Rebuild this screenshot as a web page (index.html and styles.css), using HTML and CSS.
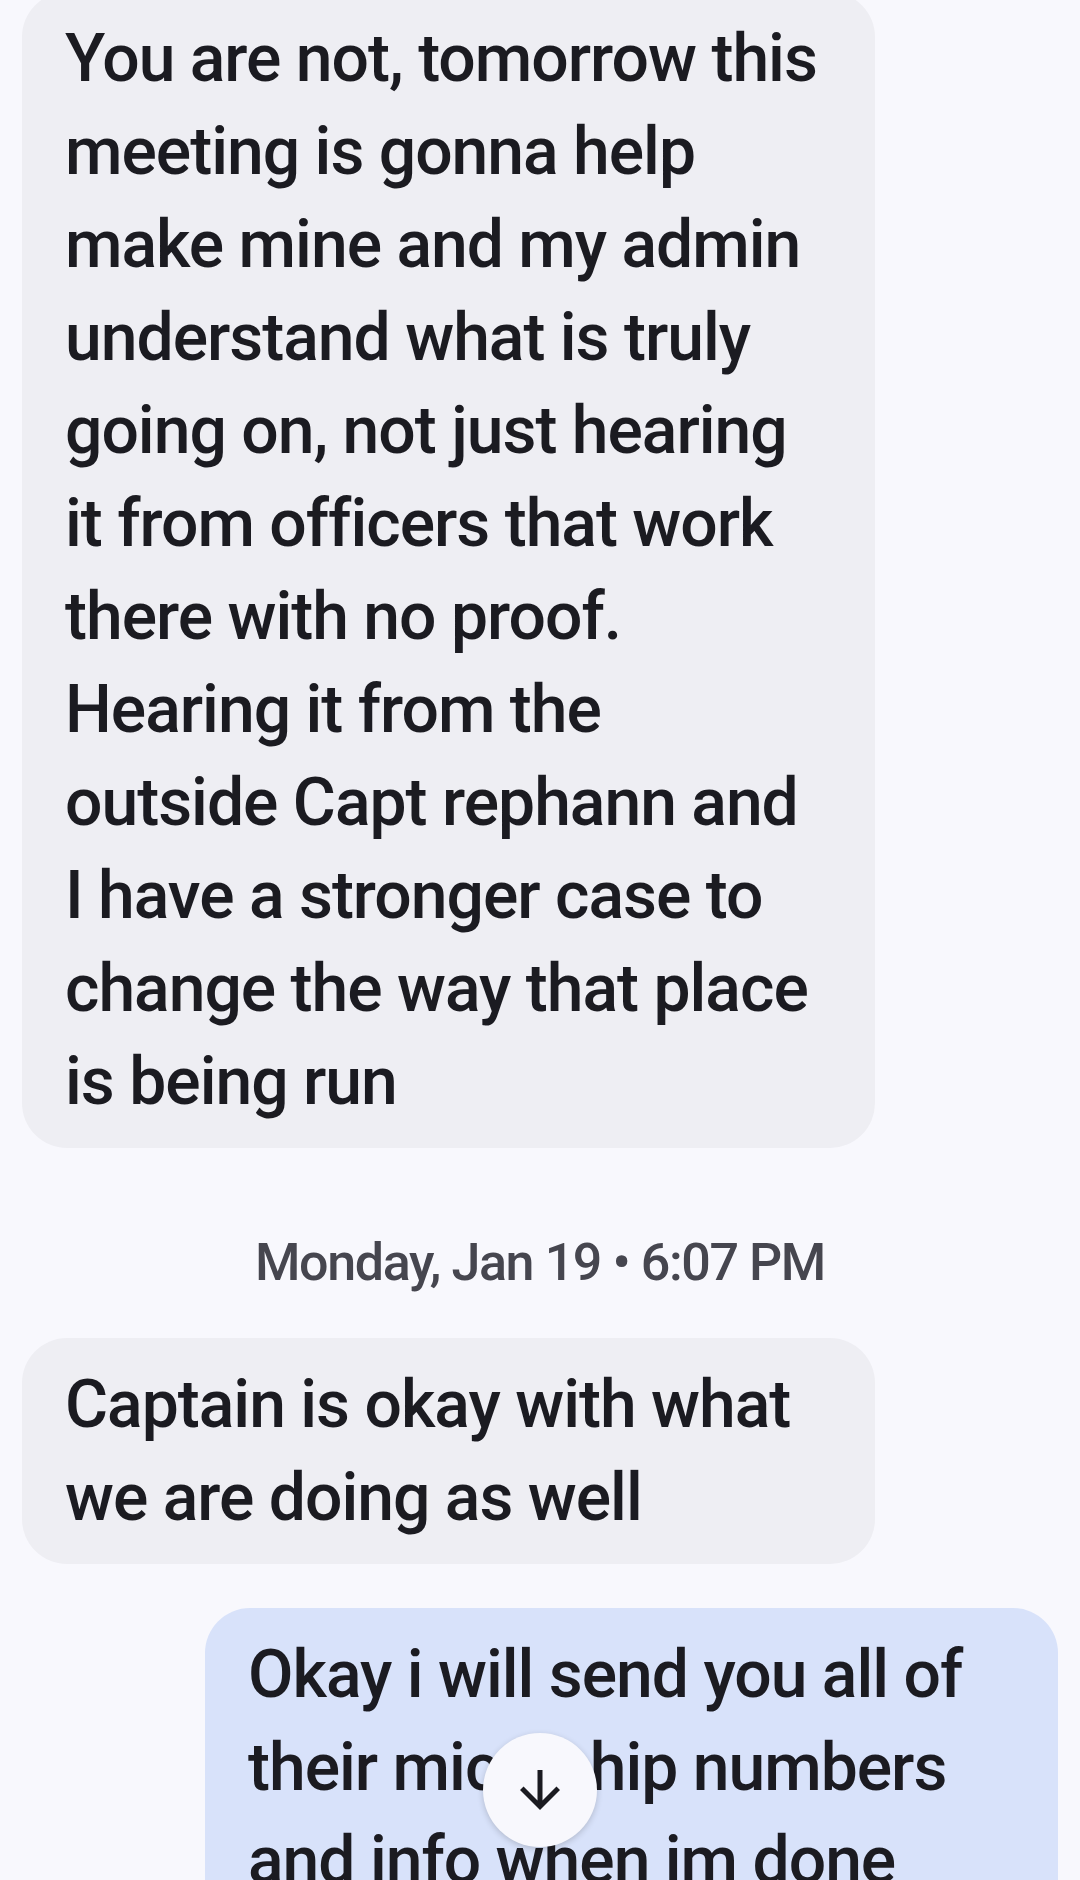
FILE: index.html
```html
<!DOCTYPE html>
<html lang="en">
<head>
<meta charset="utf-8">
<title>Messages</title>
<link rel="stylesheet" href="styles.css">
</head>
<body>
<main class="thread">
  <div class="bubble in first">You are not, tomorrow this<br>meeting is gonna help<br>make mine and my admin<br>understand what is truly<br>going on, not just hearing<br>it from officers that work<br>there with no proof.<br>Hearing it from the<br>outside Capt rephann and<br>I have a stronger case to<br>change the way that place<br>is being run</div>
  <div class="date">Monday, Jan 19 • 6:07 PM</div>
  <div class="bubble in">Captain is okay with what<br>we are doing as well</div>
  <div class="bubble out">Okay i will send you all of<br>their microchip numbers<br>and info when im done</div>
</main>
<button class="scroll-down" aria-label="Scroll to bottom">
  <svg viewBox="0 0 24 24" width="60" height="60"><path d="M20 12l-1.41-1.41L13 16.17V4h-2v12.17l-5.58-5.59L4 12l8 8 8-8z" fill="#1b1b21"/></svg>
</button>
</body>
</html>
```
FILE: styles.css
```css
html, body {
  margin: 0;
  height: 1880px;
  overflow: hidden;
  background: #f8f8fd;
}
body {
  position: relative;
  font-family: Roboto, "Noto Sans", sans-serif;
  font-weight: 500;
  color: #1b1b21;
}
.thread {
  display: flex;
  flex-direction: column;
  padding: 0 22px;
}
.bubble {
  box-sizing: border-box;
  width: 853px;
  padding: 20px 43px;
  border-radius: 45px;
  font-size: 66px;
  line-height: 93px;
  letter-spacing: -1px;
  white-space: nowrap;
}
.bubble.in {
  background: #eeeef3;
  align-self: flex-start;
}
.bubble.out {
  background: #d8e2fa;
  align-self: flex-end;
  margin-top: 44px;
}
.bubble.first {
  margin-top: -8px;
}
.date {
  margin: 85px 0 45px;
  text-align: center;
  font-size: 52px;
  line-height: 60px;
  letter-spacing: -1.4px;
  color: #46464f;
}
.scroll-down {
  position: absolute;
  left: 483px;
  top: 1733px;
  width: 114px;
  height: 114px;
  padding: 0;
  border: none;
  border-radius: 50%;
  background: #f8f8fd;
  box-shadow: 0 2px 6px rgba(0, 0, 0, 0.18);
  display: flex;
  align-items: center;
  justify-content: center;
}
```
